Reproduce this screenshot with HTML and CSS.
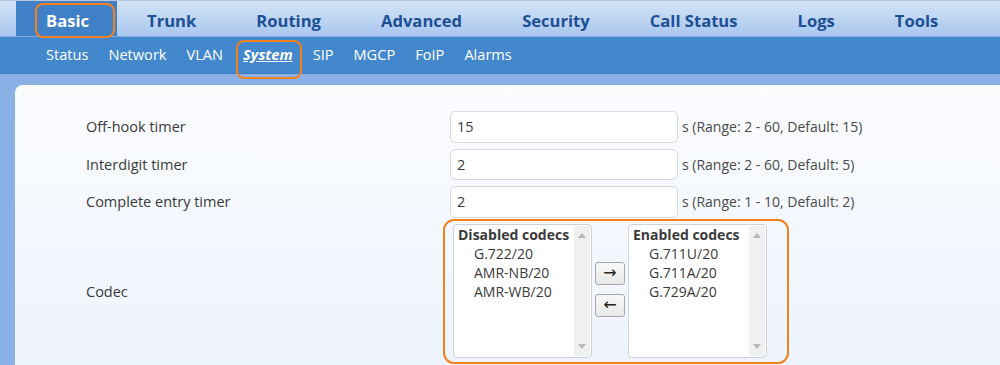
FILE: index.html
```html
<!DOCTYPE html>
<html lang="en">
<head>
    <meta charset="UTF-8">
    <title>System</title>
    <link rel="stylesheet" href="styles.css">
</head>
<body>
    <div class="topnav">
        <a class="tab active marked">Basic</a>
        <a class="tab">Trunk</a>
        <a class="tab">Routing</a>
        <a class="tab">Advanced</a>
        <a class="tab">Security</a>
        <a class="tab">Call Status</a>
        <a class="tab">Logs</a>
        <a class="tab">Tools</a>
    </div>
    <div class="subnav">
        <a class="sub">Status</a>
        <a class="sub">Network</a>
        <a class="sub">VLAN</a>
        <a class="sub current marked">System</a>
        <a class="sub">SIP</a>
        <a class="sub">MGCP</a>
        <a class="sub">FoIP</a>
        <a class="sub">Alarms</a>
    </div>
    <div class="band"></div>
    <div class="content">
        <div class="row">
            <label class="lbl">Off-hook timer</label>
            <input class="field" type="text" value="15">
            <span class="hint">s (Range: 2 - 60, Default: 15)</span>
        </div>
        <div class="row">
            <label class="lbl">Interdigit timer</label>
            <input class="field" type="text" value="2">
            <span class="hint">s (Range: 2 - 60, Default: 5)</span>
        </div>
        <div class="row">
            <label class="lbl">Complete entry timer</label>
            <input class="field" type="text" value="2">
            <span class="hint">s (Range: 1 - 10, Default: 2)</span>
        </div>
        <div class="row codec-row">
            <label class="lbl">Codec</label>
            <div class="codec">
                <div class="listbox">
                    <div class="opts">
                        <div class="grp">Disabled codecs</div>
                        <div class="opt">G.722/20</div>
                        <div class="opt">AMR-NB/20</div>
                        <div class="opt">AMR-WB/20</div>
                    </div>
                    <div class="scroll"><span class="up"></span><span class="down"></span></div>
                </div>
                <div class="movers">
                    <button class="mv">&rarr;</button>
                    <button class="mv">&larr;</button>
                </div>
                <div class="listbox">
                    <div class="opts">
                        <div class="grp">Enabled codecs</div>
                        <div class="opt">G.711U/20</div>
                        <div class="opt">G.711A/20</div>
                        <div class="opt">G.729A/20</div>
                    </div>
                    <div class="scroll"><span class="up"></span><span class="down"></span></div>
                </div>
            </div>
        </div>
    </div>
</body>
</html>
```
FILE: styles.css
```css
html,body{
    margin:0;
    height:100%;
}
body{
    font-family:"Open Sans","Noto Sans",sans-serif;
    background:#8ab0e6;
    overflow:hidden;
}
a{
    cursor:pointer;
}
/* top menu */
.topnav{
    display:flex;
    height:35px;
    padding-left:16px;
    border-top:1px solid #b6c8de;
    background:linear-gradient(#d3e3f7,#a9c7ee);
    border-bottom:1px solid #7ea9dd;
}
.tab{
    position:relative;
    padding:2px 30px 0;
    line-height:36px;
    font-size:16.6px;
    font-weight:bold;
    color:#1c4f94;
}
.tab.active{
    padding-right:28px;
    color:#fff;
    background:#3f80c6;
}
.tab.marked:after{
    content:"";
    position:absolute;
    left:19px;
    right:2px;
    top:2px;
    bottom:-2px;
    border:2.5px solid #f5801e;
    border-radius:8px;
}
/* second menu */
.subnav{
    display:flex;
    gap:20px;
    height:36px;
    padding-left:46px;
    background:#4388cd;
    border-bottom:1px solid #3e7fc2;
}
.sub{
    position:relative;
    line-height:34px;
    font-size:14.6px;
    color:#fff;
}
.sub.current{
    font-weight:bold;
    font-style:italic;
    text-decoration:underline;
}
.sub.marked:after{
    content:"";
    position:absolute;
    left:-7px;
    right:-9px;
    top:3px;
    bottom:-6px;
    border:2.5px solid #f5801e;
    border-radius:8px;
}
.band{
    height:11px;
}
/* form */
.content{
    margin-left:15px;
    height:100%;
    padding-top:26px;
    border-radius:8px 0 0 0;
    background:linear-gradient(#fbfcfe,#eef4fd 280px);
    color:#3a3a3a;
    font-size:14px;
}
.row{
    display:flex;
    align-items:center;
    margin-bottom:6px;
}
.lbl{
    width:364px;
    padding-left:71px;
    font-size:14.5px;
}
.field{
    box-sizing:border-box;
    width:228px;
    height:31.5px;
    margin:0 4px 0 0;
    padding:0 6px;
    border:1px solid #d6d9de;
    border-radius:5px;
    background:#fff;
    font-family:inherit;
    font-size:14.5px;
    color:#3a3a3a;
}
.hint{
    font-size:14px;
    color:#4a4a4a;
}
.codec-row{
    margin-top:-5px;
}
.codec{
    display:flex;
    align-items:flex-start;
    gap:3px;
    margin-left:-7px;
    padding:3px 20px 4px 8px;
    border:2.5px solid #f5801e;
    border-radius:11px;
}
.listbox{
    display:flex;
    box-sizing:border-box;
    width:139px;
    height:134px;
    border:1px solid #cfd3d8;
    border-radius:4px;
    background:#fff;
}
.opts{
    flex:1;
    padding:0 0 0 4px;
    line-height:19px;
    font-size:14px;
}
.grp{
    font-weight:bold;
}
.opt{
    padding-left:16px;
}
.scroll{
    position:relative;
    width:16px;
    margin:1px 1px 1px 0;
    background:#f0f0f0;
}
.up,.down{
    position:absolute;
    left:4px;
    width:0;
    height:0;
    border-left:4px solid transparent;
    border-right:4px solid transparent;
}
.up{
    top:7px;
    border-bottom:5px solid #b8b8b8;
}
.down{
    bottom:7px;
    border-top:5px solid #b8b8b8;
}
.movers{
    display:flex;
    flex-direction:column;
    gap:9px;
    padding-top:38px;
}
.mv{
    width:30px;
    height:23px;
    padding:0;
    border:1px solid #a9a9a9;
    border-radius:3px;
    background:linear-gradient(#f8f8f8,#e8e8e8);
    font-family:"DejaVu Sans",sans-serif;
    font-size:16px;
    line-height:20px;
    color:#222;
}
```
